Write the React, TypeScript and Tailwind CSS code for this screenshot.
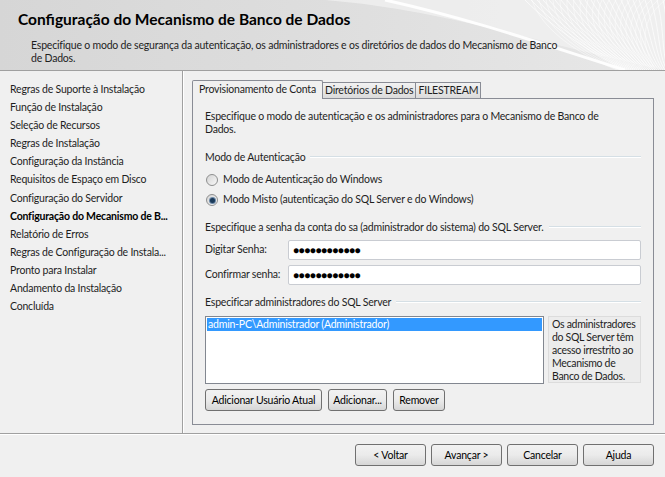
import React from 'react';

const NAV = [
  'Regras de Suporte à Instalação',
  'Função de Instalação',
  'Seleção de Recursos',
  'Regras de Instalação',
  'Configuração da Instância',
  'Requisitos de Espaço em Disco',
  'Configuração do Servidor',
  'Configuração do Mecanismo de B...',
  'Relatório de Erros',
  'Regras de Configuração de Instala...',
  'Pronto para Instalar',
  'Andamento da Instalação',
  'Concluída',
];

const btn =
  'h-[22px] px-[2px] whitespace-nowrap rounded-[3px] border border-[#707070] bg-gradient-to-b from-[#f2f2f2] via-[#ebebeb] to-[#d6d6d6] text-[#000] leading-none';

const GroupLabel = ({ children }: { children: React.ReactNode }) => (
  <div className="flex items-center gap-[5px] h-[14px] leading-[14px]">
    <span className="whitespace-nowrap">{children}</span>
    <div className="flex-1 h-[2px] border-t border-[#d5dfe5] border-b border-b-white" />
  </div>
);

const Radio = ({ checked, label }: { checked?: boolean; label: string }) => (
  <div className="flex items-center gap-[5px] h-[20px]">
    <div className="w-[12px] h-[12px] rounded-full border border-[#8e8f8f] bg-gradient-to-br from-[#d4d4d4] to-[#f8f8f8] flex items-center justify-center">
      {checked && <div className="w-[5px] h-[5px] rounded-full bg-[#1a3a5a] ring-1 ring-[#6d8aa8]" />}
    </div>
    <span>{label}</span>
  </div>
);

const Dots = () => (
  <span className="text-[10px] tracking-[-0.4px] text-black leading-none">●●●●●●●●●●●●</span>
);

export default function App() {
  return (
    <div
      className="w-[665px] h-[477px] bg-[#f0f0f0] flex flex-col text-[10.5px] tracking-[-0.2px] text-[#1e1e1e] overflow-hidden"
      style={{ fontFamily: 'Lato, "Open Sans", sans-serif' }}
    >
      {/* Header */}
      <div className="relative h-[71px] border-b border-[#a0a0a0] bg-gradient-to-r from-[#d6d6d6] via-[#dedede] to-[#e8e8e8] overflow-hidden shrink-0">
        <svg className="absolute right-0 top-0" width="340" height="70" viewBox="0 0 340 70">
          <path d="M0 0 C120 10 200 40 340 70 L340 0 Z" fill="#f2f2f2" opacity="0.7" />
          {Array.from({ length: 26 }).map((_, i) => (
            <path
              key={i}
              d={`M${200 + i * 6} 0 C${230 + i * 5} 30 ${270 + i * 3} 55 ${300 + i * 2} 70`}
              stroke="#ffffff"
              strokeWidth="0.8"
              fill="none"
              opacity="0.85"
            />
          ))}
          {Array.from({ length: 20 }).map((_, i) => (
            <path
              key={'b' + i}
              d={`M${340 - i * 7} 0 C${310 - i * 5} 25 ${320 - i * 4} 50 ${330 - i * 2} 70`}
              stroke="#ffffff"
              strokeWidth="0.8"
              fill="none"
              opacity="0.6"
            />
          ))}
          <path d="M60 0 C150 20 220 45 300 70" stroke="#ffffff" strokeWidth="3" fill="none" opacity="0.9" />
        </svg>
        <div className="relative pl-[18px] pt-[9px]">
          <div className="text-[15.5px] tracking-normal font-bold text-black leading-[20px]">
            Configuração do Mecanismo de Banco de Dados
          </div>
          <div className="mt-[10px] pl-[13px] pr-[95px] leading-[13px] text-[#1e1e1e]">
            Especifique o modo de segurança da autenticação, os administradores e os diretórios de dados do Mecanismo de Banco de Dados.
          </div>
        </div>
      </div>

      {/* Body */}
      <div className="flex h-[363px] border-b border-[#a0a0a0] shrink-0">
        <div className="w-[183px] border-r border-[#a0a0a0] pt-[9px] pl-[10px] shrink-0">
          {NAV.map((n) => (
            <div
              key={n}
              className={`h-[18.1px] leading-[18px] whitespace-nowrap ${n.startsWith('Configuração do Mecanismo') ? 'font-bold text-black' : ''}`}
            >
              {n}
            </div>
          ))}
        </div>

        <div className="flex-1 border-l border-white pl-[8px] pt-[9px] pr-[11px]">
          {/* Tabs */}
          <div className="flex items-end h-[19px]">
            <div className="h-[19px] px-[6px] border border-b-0 border-[#898c95] bg-[#f0f0f0] relative z-10 leading-[17px] rounded-t-[2px]">
              Provisionamento de Conta
            </div>
            <div className="h-[17px] px-[2px] border border-l-0 border-[#898c95] bg-gradient-to-b from-[#f2f2f2] to-[#dbdbdb] leading-[15px]">
              Diretórios de Dados
            </div>
            <div className="h-[17px] px-[2px] border border-l-0 border-[#898c95] bg-gradient-to-b from-[#f2f2f2] to-[#dbdbdb] leading-[15px]">
              FILESTREAM
            </div>
          </div>
          <div className="-mt-[1px] h-[327px] border border-[#898c95] bg-[#f0f0f0] pl-[12px] pt-[11px] pr-[12px]">
            <div className="leading-[13px] pr-[20px]">
              Especifique o modo de autenticação e os administradores para o Mecanismo de Banco de Dados.
            </div>

            <div className="mt-[14px]">
              <GroupLabel>Modo de Autenticação</GroupLabel>
            </div>
            <div className="mt-[6px] flex flex-col pl-[1px]">
              <Radio label="Modo de Autenticação do Windows" />
              <Radio checked label="Modo Misto (autenticação do SQL Server e do Windows)" />
            </div>

            <div className="mt-[10px]">
              <GroupLabel>Especifique a senha da conta do sa (administrador do sistema) do SQL Server.</GroupLabel>
            </div>
            <div className="mt-[6px] flex flex-col gap-[5px]">
              <div className="flex items-center">
                <span className="w-[83px] whitespace-nowrap">Digitar Senha:</span>
                <div className="flex-1 h-[20px] bg-white border border-[#c9ccd2] rounded-[2px] pl-[4px] flex items-center">
                  <Dots />
                </div>
              </div>
              <div className="flex items-center">
                <span className="w-[83px] whitespace-nowrap">Confirmar senha:</span>
                <div className="flex-1 h-[20px] bg-white border border-[#c9ccd2] rounded-[2px] pl-[4px] flex items-center">
                  <Dots />
                </div>
              </div>
            </div>

            <div className="mt-[10px]">
              <GroupLabel>Especificar administradores do SQL Server</GroupLabel>
            </div>
            <div className="mt-[7px] flex gap-[4px]">
              <div className="w-[339px] h-[68px] bg-white border border-[#828790] p-[1px]">
                <div className="bg-[#3399ff] text-white h-[13px] leading-[13px] pl-[1px]">
                  admin-PC\Administrador (Administrador)
                </div>
              </div>
              <div className="flex-1 h-[67px] border border-[#dcdcdc] bg-[#ececec] pl-[3px] pt-[1px] leading-[13px] tracking-[-0.3px]">
                Os administradores do SQL Server têm acesso irrestrito ao Mecanismo de Banco de Dados.
              </div>
            </div>
            <div className="mt-[5px] flex gap-[6px]">
              <button className={btn + ' w-[117px]'}>Adicionar Usuário Atual</button>
              <button className={btn + ' w-[59px] border-[#3c7fb1] from-[#eaf6fd] via-[#d9f0fc] to-[#bee6fd]'}>
                Adicionar...
              </button>
              <button className={btn + ' w-[52px]'}>Remover</button>
            </div>
          </div>
        </div>
      </div>

      {/* Footer */}
      <div className="flex-1 border-t border-white flex justify-end gap-[5px] pt-[9px] pr-[11px]">
        <button className={btn + ' w-[71px]'}>&lt; Voltar</button>
        <button className={btn + ' w-[71px]'}>Avançar &gt;</button>
        <button className={btn + ' w-[71px]'}>Cancelar</button>
        <button className={btn + ' w-[71px]'}>Ajuda</button>
      </div>
    </div>
  );
}
